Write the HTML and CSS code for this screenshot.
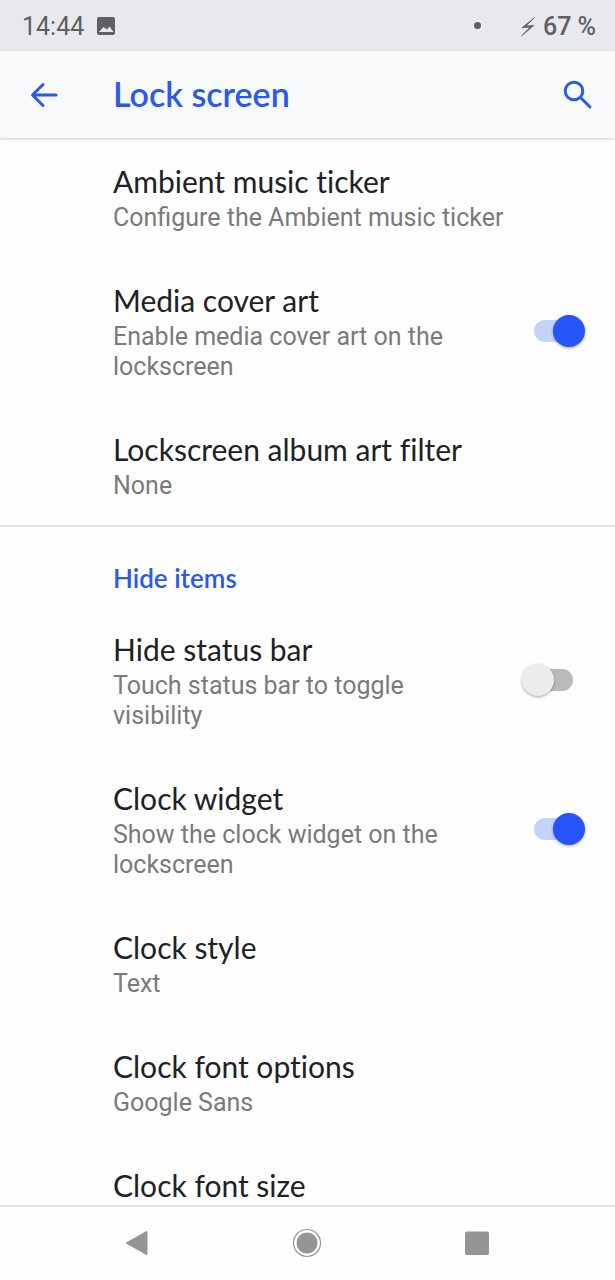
FILE: index.html
```html
<!DOCTYPE html>
<html lang="en">
<head>
    <meta charset="utf-8">
    <meta name="viewport" content="width=device-width, initial-scale=1">
    <title>Lock screen</title>
    <link rel="stylesheet" href="styles.css">
</head>
<body>
    <div class="statusbar">
        <span class="time">14:44</span>
        <svg class="picture" viewBox="0 0 18 18" aria-hidden="true">
            <path fill-rule="evenodd" d="M2 0h14a2 2 0 0 1 2 2v14a2 2 0 0 1-2 2H2a2 2 0 0 1-2-2V2a2 2 0 0 1 2-2zM2 15h14.500L12.500 9.500l-2.500 3-3.500-2.500z"/>
        </svg>
        <span class="dot"></span>
        <svg class="bolt" viewBox="0 0 14 20" aria-hidden="true">
            <path d="M13.500 0.500L0.800 10.800 8.800 10.200 0.500 19 13.200 8.300 5.200 8.900z" stroke="#5f6063" stroke-width="0.600" stroke-linejoin="round"/>
        </svg>
        <span class="battery">67 %</span>
    </div>

    <header class="toolbar">
        <button class="icon-btn" aria-label="Back">
            <svg viewBox="0 0 30 30"><path d="M27 15H4M14 4.500L3.500 15 14 25.500"/></svg>
        </button>
        <h1>Lock screen</h1>
        <button class="icon-btn" aria-label="Search">
            <svg viewBox="0 0 30 30"><circle cx="11" cy="11" r="8.800"/><path d="M17.800 17.800L27 27"/></svg>
        </button>
    </header>

    <main class="settings">
        <section>
            <a class="row" href="#ambient">
                <span class="title">Ambient music ticker</span>
                <span class="summary">Configure the Ambient music ticker</span>
            </a>
            <div class="row switch-row">
                <label for="cover-art">
                    <span class="title">Media cover art</span>
                    <span class="summary">Enable media cover art on the lockscreen</span>
                </label>
                <input type="checkbox" class="switch" id="cover-art" checked>
            </div>
            <a class="row" href="#filter">
                <span class="title">Lockscreen album art filter</span>
                <span class="summary">None</span>
            </a>
        </section>

        <section class="group">
            <h2>Hide items</h2>
            <div class="row switch-row">
                <label for="hide-status">
                    <span class="title">Hide status bar</span>
                    <span class="summary">Touch status bar to toggle visibility</span>
                </label>
                <input type="checkbox" class="switch" id="hide-status">
            </div>
            <div class="row switch-row">
                <label for="clock">
                    <span class="title">Clock widget</span>
                    <span class="summary">Show the clock widget on the lockscreen</span>
                </label>
                <input type="checkbox" class="switch" id="clock" checked>
            </div>
            <a class="row" href="#clock-style">
                <span class="title">Clock style</span>
                <span class="summary">Text</span>
            </a>
            <a class="row" href="#clock-font">
                <span class="title">Clock font options</span>
                <span class="summary">Google Sans</span>
            </a>
            <a class="row" href="#clock-size">
                <span class="title">Clock font size</span>
            </a>
        </section>
    </main>

    <nav class="navbar">
        <button aria-label="Back">
            <svg viewBox="0 0 30 30"><path d="M4 15L23.500 4v22z" stroke-width="2" stroke-linejoin="round" stroke="#959595"/></svg>
        </button>
        <button aria-label="Home">
            <svg viewBox="0 0 30 30"><circle cx="15" cy="15" r="10.500"/><circle cx="15" cy="15" r="13.500" fill="none" stroke="#959595" stroke-width="1.200"/></svg>
        </button>
        <button aria-label="Recent apps">
            <svg viewBox="0 0 30 30"><rect x="3" y="3.500" width="24" height="23.500" rx="2"/></svg>
        </button>
    </nav>
</body>
</html>
```

FILE: styles.css
```css
* {
    box-sizing: border-box;
}

body {
    margin: 0;
    height: 100vh;
    display: flex;
    flex-direction: column;
    background: #fefefe;
    color: #202124;
    font-family: Roboto, sans-serif;
}

button {
    border: none;
    padding: 0;
    background: none;
    cursor: pointer;
}

svg {
    display: block;
}

/* status bar */
.statusbar {
    display: flex;
    align-items: center;
    flex-shrink: 0;
    height: 51px;
    padding: 2px 19px 0 22px;
    background: #e8e9ed;
    color: #5f6063;
    font-size: 25px;
    line-height: 30px;
}

.picture {
    width: 18px;
    height: 18px;
    margin: 0 0 2px 13px;
    fill: #5f6063;
}

.dot {
    width: 7px;
    height: 7px;
    margin: 0 0 2px auto;
    border-radius: 50%;
    background: #5f6063;
}

.bolt {
    width: 14px;
    height: 20px;
    margin: 0 8px 0 40px;
    fill: #5f6063;
}

.battery {
    font-weight: 500;
}

/* toolbar */
.toolbar {
    display: flex;
    align-items: center;
    flex-shrink: 0;
    height: 87px;
    padding: 0 22px 0 29px;
    background: #f8f9fb;
    box-shadow: 0 1px 3px rgba(0, 0, 0, 0.2);
    z-index: 1;
}

.toolbar h1 {
    flex: 1;
    margin: 0 0 2px 54px;
    color: #2a5aea;
    font-family: Lato, sans-serif;
    font-size: 34px;
    font-weight: 600;
    line-height: 40px;
}

.icon-btn svg {
    width: 30px;
    height: 30px;
    fill: none;
    stroke: #2a5aea;
    stroke-width: 3;
    stroke-linecap: round;
    stroke-linejoin: round;
}

/* settings list */
.settings {
    flex: 1;
    min-height: 0;
    overflow-y: auto;
    scrollbar-width: none;
}

.row {
    display: block;
    padding: 23px 30px 24px 113px;
    color: inherit;
    text-decoration: none;
}

.title {
    display: block;
    margin-bottom: 2px;
    font-family: Lato, sans-serif;
    font-size: 30px;
    font-variant-ligatures: no-common-ligatures;
    line-height: 40px;
}

.summary {
    display: block;
    color: #7a7a7a;
    font-size: 25px;
    line-height: 30px;
}

.group {
    border-top: 2px solid #e2e2e2;
}

.group h2 {
    margin: 0;
    padding: 36px 30px 13px 113px;
    color: #2a5aea;
    font-family: Lato, sans-serif;
    font-size: 26px;
    font-weight: 600;
    line-height: 30px;
}

.switch-row {
    display: flex;
    align-items: center;
    gap: 30px;
}

.switch-row label {
    flex: 1;
}

.switch {
    appearance: none;
    position: relative;
    flex-shrink: 0;
    width: 63px;
    height: 32px;
    margin: 0;
    cursor: pointer;
}

.switch::before {
    content: "";
    position: absolute;
    inset: 5px 12px;
    border-radius: 11px;
    background: #bababa;
}

.switch::after {
    content: "";
    position: absolute;
    left: 0;
    width: 32px;
    height: 32px;
    border-radius: 50%;
    background: #ececec;
    box-shadow: 0 1px 3px rgba(0, 0, 0, 0.35);
}

.switch:checked::before {
    background: #c5d2fb;
}

.switch:checked::after {
    left: auto;
    right: 0;
    background: #2554fb;
}

/* navigation bar */
.navbar {
    display: flex;
    justify-content: space-around;
    align-items: center;
    flex-shrink: 0;
    height: 75px;
    padding: 0 53px 2px;
    border-top: 2px solid #e2e2e2;
}

.navbar svg {
    width: 30px;
    height: 30px;
    fill: #959595;
}
```
